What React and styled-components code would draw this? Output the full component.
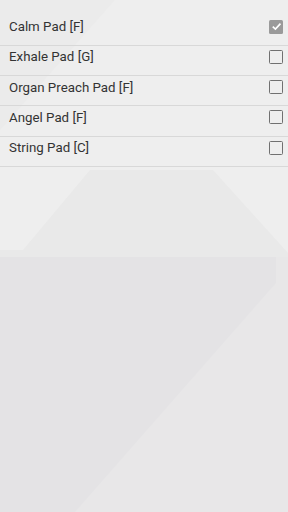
import React from "react";
import styled, { createGlobalStyle } from "styled-components";

const Global = createGlobalStyle`
  html, body { margin: 0; padding: 0; }
  body { font-family: Roboto, "Liberation Sans", sans-serif; background: #ececec; }
`;

const Page = styled.div`
  position: relative;
  width: 288px;
  height: 512px;
  overflow: hidden;
  background: #ededed;
`;

const Backdrop = styled.svg`
  position: absolute;
  inset: 0;
  width: 288px;
  height: 512px;
  z-index: 0;
`;

const List = styled.ul`
  position: relative;
  z-index: 1;
  list-style: none;
  margin: 0;
  padding: 15.5px 0 0;
`;

const Row = styled.li`
  box-sizing: border-box;
  height: 30.25px;
  display: flex;
  align-items: center;
  justify-content: space-between;
  padding: 0 5px 7px 9px;
  border-bottom: 1px solid #d8d8d8;
`;

const Label = styled.span`
  font-size: 13.3px;
  color: #333;
`;

const Box = styled.span`
  box-sizing: border-box;
  width: 14px;
  height: 14px;
  border-radius: 1.5px;
  display: flex;
  align-items: center;
  justify-content: center;
  background: ${(p) => (p.$checked ? "#9a9a9a" : "transparent")};
  border: ${(p) => (p.$checked ? "none" : "1.7px solid #707070")};
`;

const items = [
  { name: "Calm Pad [F]", checked: true },
  { name: "Exhale Pad [G]", checked: false },
  { name: "Organ Preach Pad [F]", checked: false },
  { name: "Angel Pad [F]", checked: false },
  { name: "String Pad [C]", checked: false },
];

export default function App() {
  return (
    <Page>
      <Global />
      <Backdrop viewBox="0 0 288 512">
        <rect x="0" y="0" width="288" height="512" fill="#eeeeee" />
        <polygon points="0,0 70,0 150,-40 0,130" fill="#ebebeb" />
        <polygon points="90,170 213,170 288,253 288,257 0,257 0,250 23,250" fill="#e9e9e9" />
        <polygon points="0,257 288,257 288,512 0,512" fill="#e8e7e8" />
        <polygon points="0,257 276,257 276,283 75,512 0,512" fill="#e4e3e5" />
      </Backdrop>
      <List>
        {items.map((it) => (
          <Row key={it.name}>
            <Label>{it.name}</Label>
            <Box $checked={it.checked}>
              {it.checked && (
                <svg width="11" height="11" viewBox="0 0 10 10">
                  <path d="M1.6 5.2 L4 7.4 L8.6 2.4" fill="none" stroke="#fff" strokeWidth="1.5" />
                </svg>
              )}
            </Box>
          </Row>
        ))}
      </List>
    </Page>
  );
}
